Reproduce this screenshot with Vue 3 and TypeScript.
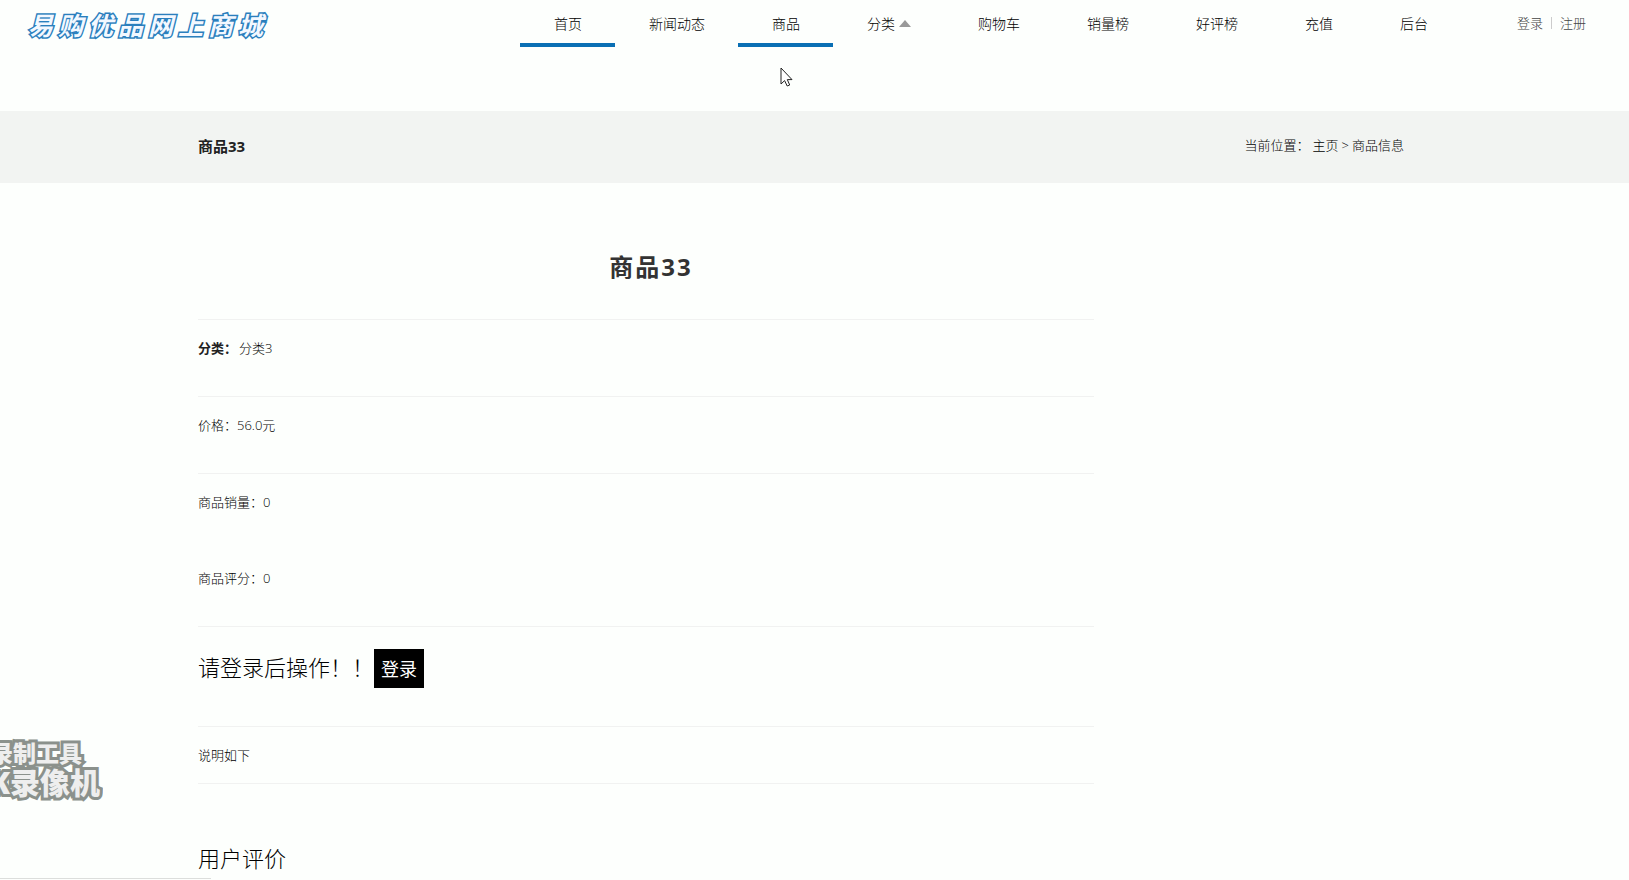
<script setup lang="ts">
interface NavItem {
  label: string
  active?: boolean
  menu?: boolean
}

const navItems: NavItem[] = [
  { label: '首页', active: true },
  { label: '新闻动态' },
  { label: '商品', active: true },
  { label: '分类', menu: true },
  { label: '购物车' },
  { label: '销量榜' },
  { label: '好评榜' },
  { label: '充值' },
  { label: '后台' },
]
</script>

<template>
  <div class="page">
    <header class="header">
      <a class="logo" href="#">易购优品网上商城</a>
      <nav class="nav">
        <a
          v-for="item in navItems"
          :key="item.label"
          href="#"
          class="nav-link"
          :class="{ active: item.active }"
        >
          {{ item.label }}<i v-if="item.menu" class="caret"></i>
        </a>
      </nav>
      <div class="account">
        <a href="#">登录</a>
        <i class="divider"></i>
        <a href="#">注册</a>
      </div>
    </header>

    <section class="band">
      <div class="container band-inner">
        <strong class="band-title">商品33</strong>
        <div class="crumbs">
          <span>当前位置：</span>
          <a href="#">主页</a>
          <span>&gt;</span>
          <a href="#">商品信息</a>
        </div>
      </div>
    </section>

    <main class="container">
      <article class="detail">
        <h1 class="title">商品33</h1>
        <div class="row"><p><b>分类：</b><span class="category">分类3</span></p></div>
        <div class="row"><p>价格：56.0元</p></div>
        <div class="row">
          <p>商品销量：0</p>
          <p>商品评分：0</p>
        </div>
        <div class="row login-row">
          <span class="login-text">请登录后操作！！</span>
          <button type="button" class="login">登录</button>
        </div>
        <div class="row note"><p>说明如下</p></div>
        <h2 class="reviews">用户评价</h2>
      </article>
    </main>

    <div class="watermark">
      <span class="mark-small">录制工具</span>
      <span class="mark-large">K录像机</span>
    </div>
    <div class="status"></div>
    <svg class="cursor" width="13" height="20" viewBox="0 0 13 20">
      <path
        d="M1 1V17L4.600 13.600L7.200 19L9.700 18L7.300 12.600H12Z"
        fill="#fff"
        stroke="#222"
        stroke-width="1"
      />
    </svg>
  </div>
</template>

<style>
body {
  margin: 0;
  background: #fdfffd;
}
</style>

<style scoped>
.page {
  position: relative;
  min-height: 100vh;
  overflow: hidden;
  box-sizing: border-box;
  background: #fdfffd;
  color: #000;
  font: 300 13px/26px "Open Sans", "Noto Sans CJK SC", sans-serif;
}

a {
  color: inherit;
  text-decoration: none;
}

b,
strong {
  color: #222;
  font-weight: 700;
}

p,
h1,
h2 {
  margin: 0;
}

.header {
  display: flex;
  height: 111px;
  padding: 0 43px 0 28px;
  align-items: flex-start;
}

.logo {
  margin-top: 7px;
  color: #f3f8ff;
  font-size: 25px;
  font-weight: 700;
  font-style: italic;
  line-height: 36px;
  letter-spacing: 5px;
  white-space: nowrap;
  -webkit-text-stroke: 3px #2b7fbd;
  paint-order: stroke fill;
}

.nav {
  display: flex;
  margin-left: auto;
}

.nav-link {
  display: flex;
  align-items: center;
  height: 47px;
  box-sizing: border-box;
  padding: 4px 33px 0 34px;
  border-bottom: 4px solid transparent;
  font-size: 14px;
  white-space: nowrap;
}

.nav-link.active {
  border-bottom-color: #0a6fb4;
}

.caret {
  margin-left: 4px;
  border: 6px solid transparent;
  border-top: 0;
  border-bottom: 7px solid #999;
}

.account {
  display: flex;
  align-items: center;
  gap: 8px;
  height: 46px;
  margin-left: 56px;
  color: #444;
}

.divider {
  width: 1px;
  height: 12px;
  background: #ccc;
}

.band {
  background: #f2f4f2;
}

.container {
  max-width: 1233px;
  margin: 0 auto;
  padding-right: 27px;
  box-sizing: border-box;
}

.band-inner {
  display: flex;
  align-items: center;
  justify-content: space-between;
  height: 72px;
}

.band-title {
  padding-bottom: 2px;
  font-size: 15px;
}

.crumbs {
  display: flex;
  gap: 3px;
  padding-bottom: 4px;
}

.detail {
  max-width: 896px;
}

.title {
  padding: 64px 0 32px 10px;
  color: #333;
  font-size: 24px;
  line-height: 40px;
  letter-spacing: 2px;
  text-align: center;
}

.row {
  border-top: 1px solid #f1f2f1;
}

.row p {
  padding: 15px 0 35px;
}

.category {
  margin-left: 2px;
}

.login-row {
  display: flex;
  align-items: flex-start;
  padding: 22px 0 38px;
}

.login-text {
  font-size: 22px;
  line-height: 36px;
}

.login {
  height: 39px;
  padding: 0 7px;
  border: 0;
  background: #000;
  color: #fff;
  font: inherit;
  font-size: 18px;
  font-weight: 400;
}

.row.note {
  border-bottom: 1px solid #f1f2f1;
}

.row.note p {
  padding-bottom: 15px;
}

.reviews {
  padding-top: 58px;
  font-size: 22px;
  font-weight: 300;
  line-height: 32px;
}

.watermark {
  position: absolute;
  left: 0;
  top: 738px;
  display: flex;
  flex-direction: column;
  align-items: flex-end;
  width: 103px;
  padding-bottom: 8px;
  overflow: hidden;
  color: #eeeeee;
  font-weight: 900;
  line-height: 30px;
  white-space: nowrap;
  -webkit-text-stroke: 6px #8b918c;
  paint-order: stroke fill;
}

.mark-small {
  padding-right: 21px;
  font-size: 23px;
}

.mark-large {
  padding-right: 3px;
  font-size: 30px;
}

.status {
  position: absolute;
  left: 0;
  bottom: 0;
  width: 211px;
  height: 1px;
  border-top: 1px solid #dcdedc;
}

.cursor {
  position: absolute;
  left: 780px;
  top: 67px;
}
</style>
